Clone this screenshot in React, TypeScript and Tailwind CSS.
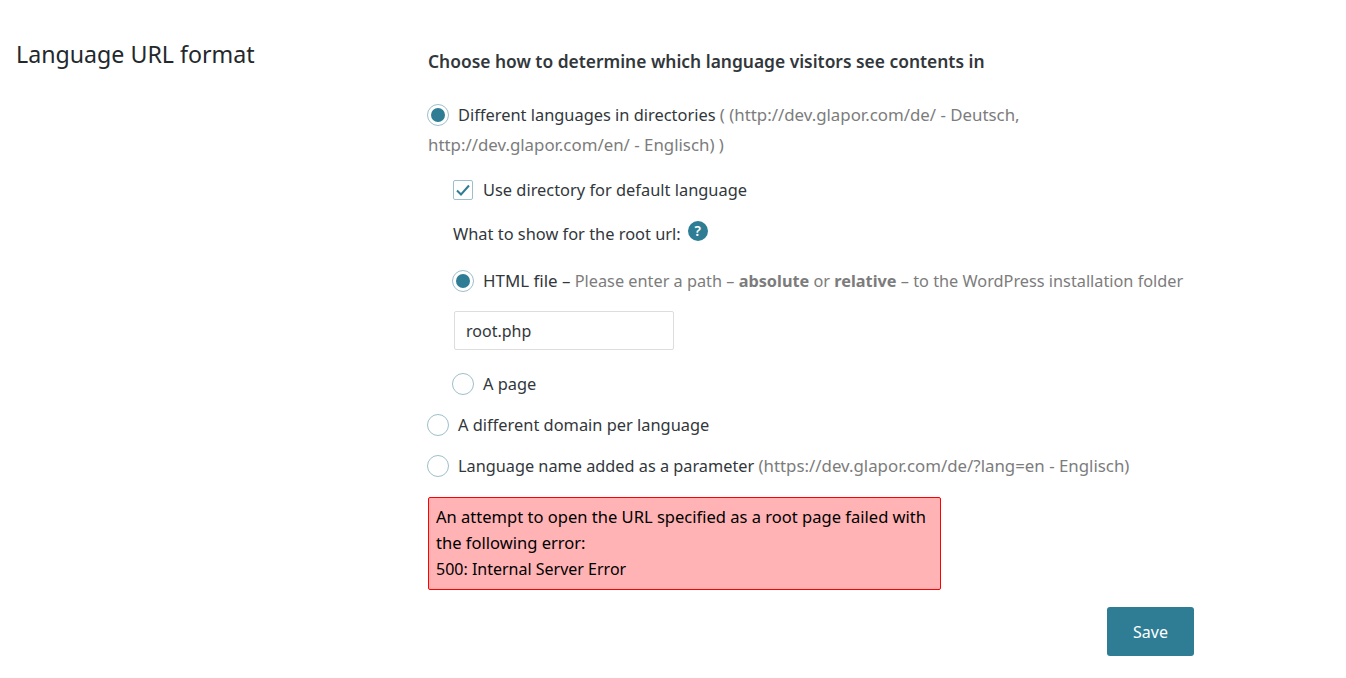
import React from 'react';

const FONT = "font-['Noto_Sans','Open_Sans',sans-serif]";

const Radio = ({ checked }: { checked?: boolean }) => (
  <span className="w-[22px] h-[22px] rounded-full border border-[#9dbfcb] bg-white flex items-center justify-center shrink-0">
    {checked && <span className="w-[14px] h-[14px] rounded-full bg-[#2e7d94]" />}
  </span>
);

export default function App() {
  return (
    <div className={`${FONT} w-[1346px] h-[678px] overflow-hidden bg-white text-[#32373c] text-[16.4px] flex`}>
      <div className="w-[428px] pl-4 pt-[38px] shrink-0">
        <h2 className="text-[23.2px] leading-[32px] text-[#23282d]">Language URL format</h2>
      </div>
      <div className="w-[766px] pt-[50px] flex flex-col">
        <div className="font-semibold text-[17.4px] leading-[22px] whitespace-nowrap">Choose how to determine which language visitors see contents in</div>

        <div className="mt-[28px] leading-[30px]">
          <div className="flex items-center gap-[9px] h-[30px]">
            <span className="-ml-[1px]"><Radio checked /></span>
            <span>
              Different languages in directories <span className="text-[#7c7c7c] text-[16.85px]">( (http://dev.glapor.com/de/ - Deutsch,</span>
            </span>
          </div>
          <div className="text-[#7c7c7c] text-[16.85px]">http://dev.glapor.com/en/ - Englisch) )</div>
        </div>

        <div className="ml-[25px] mt-[19px] flex items-center gap-[10px] h-[22px]">
          <span className="w-5 h-5 rounded-[2px] border border-[#9dbfcb] flex items-center justify-center">
            <svg width="16" height="14" viewBox="0 0 16 14" fill="none" stroke="#2e7d94" strokeWidth="2">
              <path d="M2 7.5l4 4 8-9" />
            </svg>
          </span>
          <span>Use directory for default language</span>
        </div>

        <div className="ml-[25px] mt-[21px] flex items-start h-[24px] leading-[24px] gap-[7px]">
          <span>What to show for the root url:</span>
          <span className="-mt-[1px] w-5 h-5 rounded-full bg-[#2e7d94] text-white text-[14px] leading-5 font-semibold text-center">?</span>
        </div>

        <div className="ml-[24px] mt-[23px] flex items-center gap-[9px] h-[24px] whitespace-nowrap">
          <Radio checked />
          <span className="text-[16.9px]">
            HTML file – <span className="text-[#7c7c7c] text-[16.3px]">Please enter a path – <b className="font-bold">absolute</b> or <b className="font-bold">relative</b> – to the WordPress installation folder</span>
          </span>
        </div>

        <div className="ml-[26px] mt-[18px] w-[220px] h-[39px] border border-[#dddddd] rounded-[2px] pl-[11px] leading-[38px] text-[16px]">root.php</div>

        <div className="ml-[24px] mt-[22px] flex items-center gap-[9px] h-[24px]">
          <Radio />
          <span>A page</span>
        </div>

        <div className="-ml-[1px] mt-[17px] flex items-center gap-[9px] h-[24px]">
          <Radio />
          <span>A different domain per language</span>
        </div>

        <div className="-ml-[1px] mt-[17px] flex items-center gap-[9px] h-[24px] whitespace-nowrap">
          <Radio />
          <span className="text-[16.3px]">
            Language name added as a parameter <span className="text-[#7c7c7c] text-[16.85px]">(https://dev.glapor.com/de/?lang=en - Englisch)</span>
          </span>
        </div>

        <div className="mt-[19px] w-[513px] h-[93px] border border-[#ff0000] rounded-[2px] bg-[#ffb3b5] text-black px-[7px] py-[6px] leading-[26px] text-[16.55px]">
          An attempt to open the URL specified as a root page failed with the following error:
          <br />
          <span className="text-[16px]">500: Internal Server Error</span>
        </div>

        <div className="mt-[17px] flex justify-end">
          <button className="w-[87px] h-[49px] rounded-[3px] bg-[#2e7d94] text-white text-[16px]">Save</button>
        </div>
      </div>
    </div>
  );
}
